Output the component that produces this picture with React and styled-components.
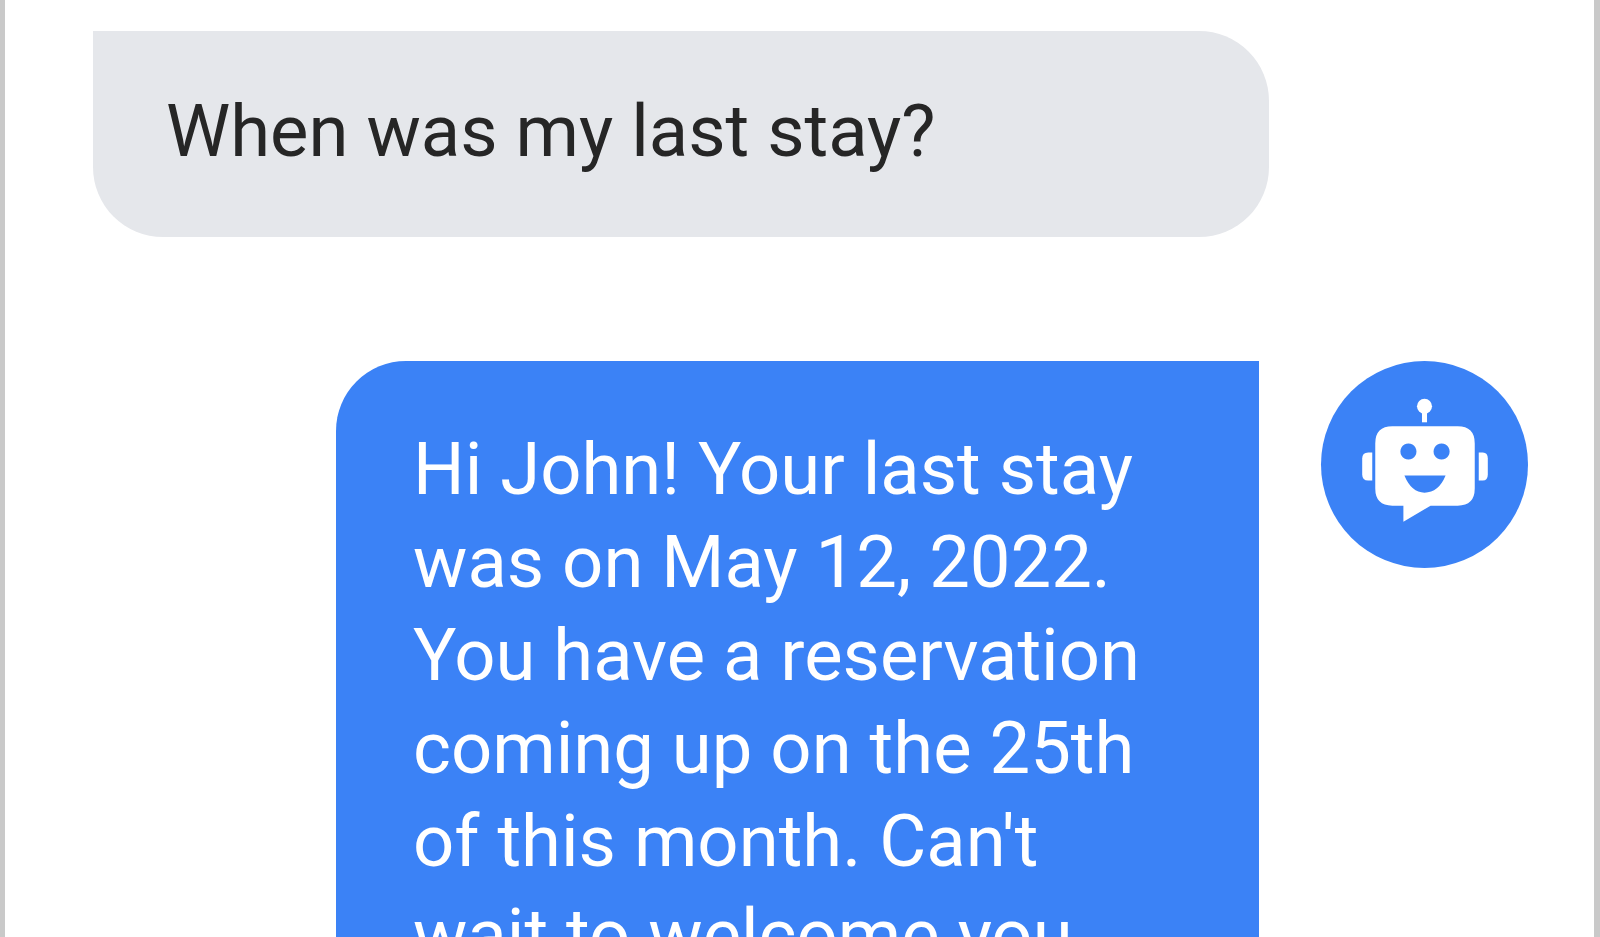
import styled, { createGlobalStyle } from "styled-components";

const GlobalStyle = createGlobalStyle`
  html, body {
    margin: 0;
    height: 100%;
    background: #fff;
    overflow: hidden;
  }
`;

const Frame = styled.div`
  box-sizing: border-box;
  height: 937px;
  overflow: hidden;
  padding: 31px 66px 0 88px;
  background: #fff;
  border-left: 5px solid #c9c9c9;
  border-right: 6px solid #c9c9c9;
  font-family: Roboto, sans-serif;
  font-size: 72.4px;
  line-height: 93.1px;
`;

const Thread = styled.div`
  display: flex;
  flex-direction: column;
  gap: 124px;
  filter: blur(0.5px);
`;

const Row = styled.div`
  display: flex;
  justify-content: ${(p) => (p.$bot ? "flex-end" : "flex-start")};
  align-items: flex-start;
  gap: 62px;
`;

const Bubble = styled.div`
  box-sizing: border-box;
  flex-shrink: 0;
  width: ${(p) => (p.$bot ? "923px" : "1176px")};
  padding: ${(p) => (p.$bot ? "62px 75px 57px 77px" : "54px 75px 59px 73px")};
  background: ${(p) => (p.$bot ? "#3b82f6" : "#e5e7eb")};
  color: ${(p) => (p.$bot ? "#fff" : "#262626")};
  border-radius: ${(p) => (p.$bot ? "70px 0 70px 70px" : "0 70px 70px 70px")};
`;

const Avatar = styled.div`
  flex-shrink: 0;
  width: 207px;
  height: 207px;
  border-radius: 50%;
  background: #3b82f6;
`;

const RobotIcon = () => (
  <svg width="207" height="207" viewBox="0 0 206 206" fill="#fff">
    <circle cx="103" cy="45" r="7.5" />
    <rect x="100.5" y="48" width="5" height="13" />
    <path d="M51 91V119H47Q41 119 41 113V97Q41 91 47 91Z" />
    <path d="M157 91V119H161Q166 119 166 113V97Q166 91 161 91Z" />
    <path
      fillRule="evenodd"
      d="M71 65H136Q153 65 153 82V127Q153 144 136 144H109L82 160V144H71Q54 144 54 127V82Q54 65 71 65ZM87 82a8 8 0 1 0 .01 0ZM120 82a8 8 0 1 0 .01 0ZM83 114H124Q117 131 103 131Q90 131 83 114Z"
    />
  </svg>
);

export default function App() {
  return (
    <>
      <GlobalStyle />
      <Frame>
        <Thread>
          <Row>
            <Bubble>When was my last stay?</Bubble>
          </Row>
          <Row $bot>
            <Bubble $bot>
              Hi John! Your last stay was on May 12, 2022. You have a reservation
              coming up on the 25th of this month. Can't wait to welcome you back!
            </Bubble>
            <Avatar>
              <RobotIcon />
            </Avatar>
          </Row>
        </Thread>
      </Frame>
    </>
  );
}
